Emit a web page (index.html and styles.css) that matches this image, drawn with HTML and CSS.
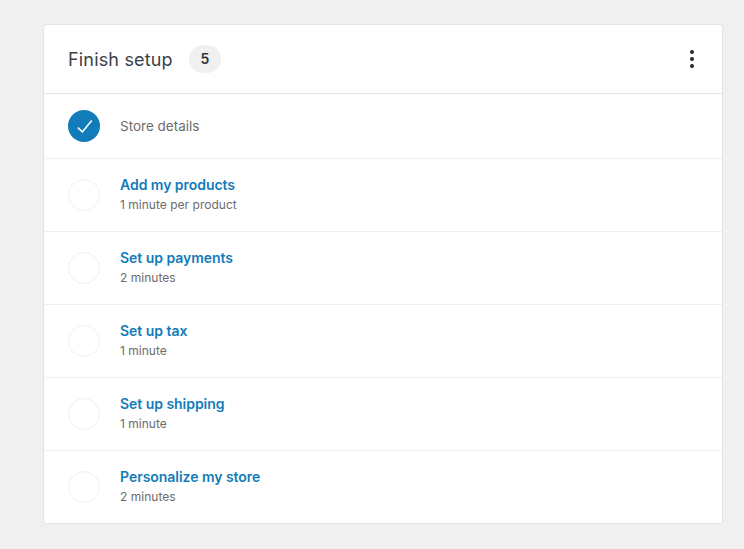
FILE: index.html
```html
<!DOCTYPE html>
<html lang="en">
<head>
<meta charset="utf-8">
<title>Finish setup</title>
<link rel="stylesheet" href="styles.css">
</head>
<body>
<section class="card">
  <header class="card-header">
    <h2 class="title">Finish setup</h2>
    <span class="badge">5</span>
    <button class="menu" aria-label="More"><i></i><i></i><i></i></button>
  </header>
  <ul class="tasks">
    <li class="task done">
      <span class="circle"><svg viewBox="0 0 32 32" width="32" height="32"><path d="M9.8 17.6l4.6 4.2 9.4-11.2" fill="none" stroke="#fff" stroke-width="1.5"/></svg></span>
      <div class="task-text"><span class="task-name">Store details</span></div>
    </li>
    <li class="task">
      <span class="circle"></span>
      <div class="task-text"><a class="task-name">Add my products</a><span class="time">1 minute per product</span></div>
    </li>
    <li class="task">
      <span class="circle"></span>
      <div class="task-text"><a class="task-name">Set up payments</a><span class="time">2 minutes</span></div>
    </li>
    <li class="task">
      <span class="circle"></span>
      <div class="task-text"><a class="task-name">Set up tax</a><span class="time">1 minute</span></div>
    </li>
    <li class="task">
      <span class="circle"></span>
      <div class="task-text"><a class="task-name">Set up shipping</a><span class="time">1 minute</span></div>
    </li>
    <li class="task">
      <span class="circle"></span>
      <div class="task-text"><a class="task-name">Personalize my store</a><span class="time">2 minutes</span></div>
    </li>
  </ul>
</section>
</body>
</html>
```
FILE: styles.css
```css
* { box-sizing: border-box; }
html, body { height: 100%; }
body {
  margin: 0;
  padding: 24px 21px 0 43px;
  background: #f0f0f0;
  font-family: Inter, "Liberation Sans", sans-serif;
  overflow: hidden;
}
.card {
  background: #fff;
  border: 1px solid #e2e4e7;
  border-radius: 3px;
  height: 500px;
}
.card-header {
  display: flex;
  align-items: center;
  height: 69px;
  padding: 0 24px;
  border-bottom: 1px solid #e2e4e7;
}
.title {
  margin: 0;
  font-size: 18px;
  font-weight: 400;
  letter-spacing: 0.17px;
  color: #3c4248;
}
.badge {
  margin-left: 16px;
  width: 32px;
  height: 28px;
  border-radius: 14px;
  background: #f0f0f0;
  color: #32373c;
  font-size: 14px;
  font-weight: 600;
  line-height: 28px;
  text-align: center;
}
.menu {
  margin-left: auto;
  margin-right: 4px;
  display: flex;
  flex-direction: column;
  gap: 3px;
  padding: 0;
  border: 0;
  background: none;
}
.menu i {
  width: 4px;
  height: 4px;
  border-radius: 50%;
  background: #23282d;
}
.tasks { list-style: none; margin: 0; padding: 0; }
.task {
  display: flex;
  align-items: center;
  height: 73px;
  padding: 0 24px;
  border-bottom: 1px solid #f0f0f0;
}
.task:last-child { border-bottom: 0; height: 72px; }
.task.done { height: 65px; }
.circle {
  flex: none;
  width: 32px;
  height: 32px;
  border-radius: 50%;
  border: 1px solid #f0f0f0;
  margin-right: 20px;
}
.done .circle { background: #127cba; border: 0; }
.circle svg { display: block; }
.task-text { display: flex; flex-direction: column; margin-top: -2px; }
.done .task-text { margin-top: 0; }
.task-name {
  font-size: 14px;
  line-height: 20px;
  font-weight: 600;
  letter-spacing: -0.04px;
  color: #127cba;
}
.done .task-name { font-weight: 400; font-size: 13.5px; letter-spacing: 0; color: #6c6c6c; }
.time {
  font-size: 12px;
  line-height: 18px;
  margin-top: 1px;
  letter-spacing: 0.02px;
  color: #6c6c6c;
}
```
